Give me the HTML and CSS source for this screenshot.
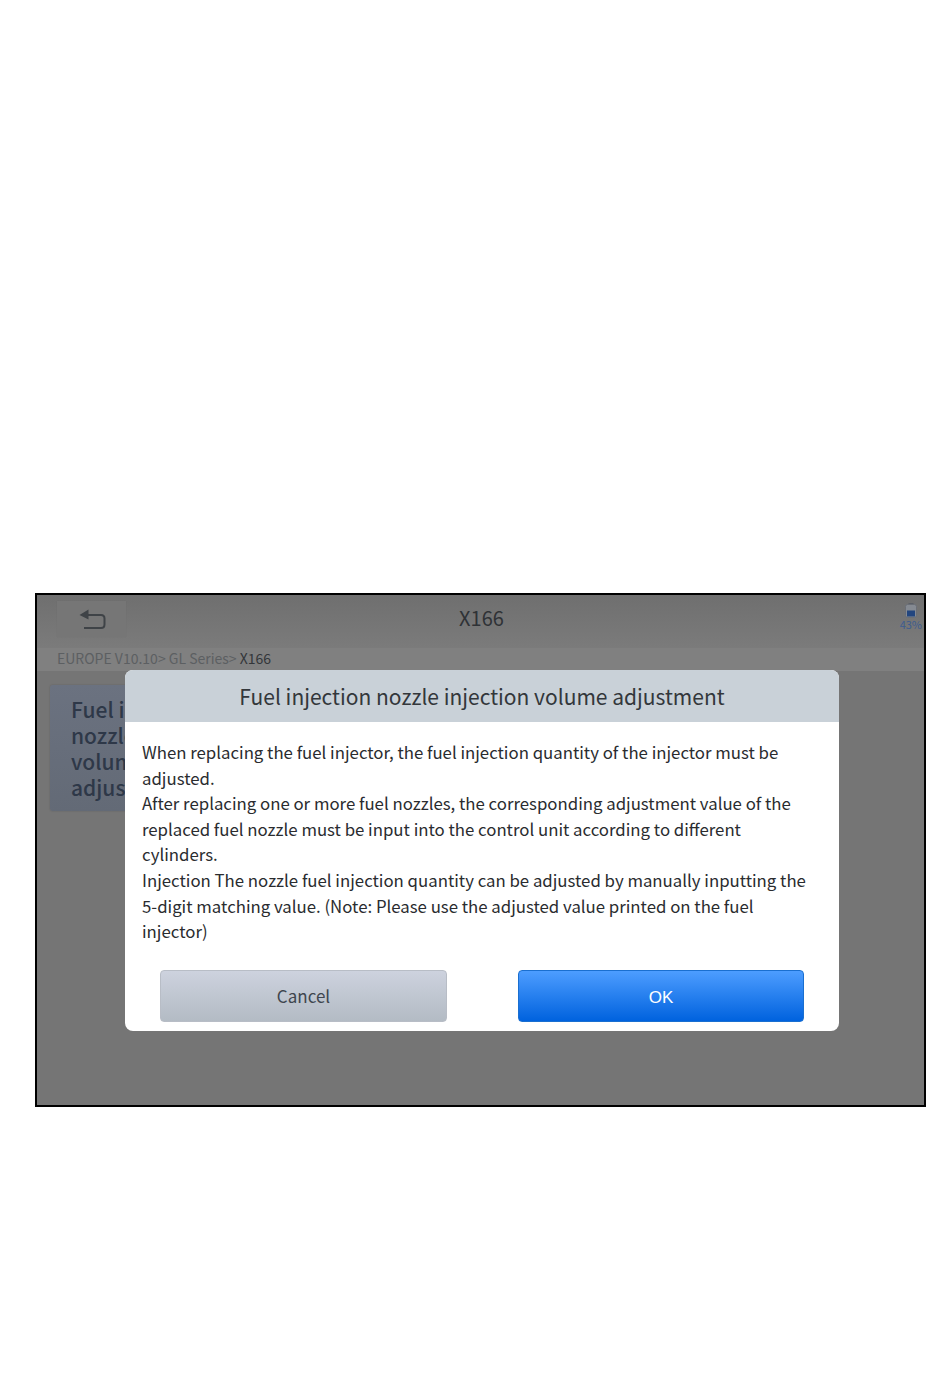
FILE: index.html
```html
<!DOCTYPE html>
<html lang="en">

<head>
  <meta charset="UTF-8" />
  <meta name="viewport" content="width=device-width, initial-scale=1.0" />
  <title>X166</title>
  <link rel="stylesheet" href="styles.css">
</head>

<body>
  <div class="screen">
    <header class="topbar">
      <div class="back-btn">
        <svg width="30" height="24" viewBox="0 0 30 24" fill="none" stroke="#3f4347" stroke-width="2">
          <path d="M9 8H24Q27.5 8 27.5 11.5V17.5Q27.5 21 24 21H7" />
          <path d="M11.5 2.5L2.5 8L11.5 12.5V2.5Z" fill="#3f4347" stroke="none" />
        </svg>
      </div>
      <h1 class="topbar-title">X166</h1>
      <div class="battery">
        <svg width="12" height="15" viewBox="0 0 12 15">
          <rect x="3.5" y="0" width="5" height="2" fill="#5c6068" />
          <rect x="0.5" y="1.5" width="11" height="13" rx="2" fill="#858a92" stroke="#6a6e76" />
          <rect x="2" y="7.5" width="8" height="6" fill="#23467f" />
        </svg>
        <span class="battery-text">43%</span>
      </div>
    </header>

    <div class="crumbs">
      <span>EUROPE V10.10&gt; GL Series&gt;</span> <span class="crumb-current">X166</span>
    </div>

    <main class="content">
      <div class="menu-card">Fuel injection nozzle injection volume adjustment</div>
    </main>

    <div class="dialog">
      <div class="dialog-title">Fuel injection nozzle injection volume adjustment</div>
      <div class="dialog-body">
        <p>When replacing the fuel injector, the fuel injection quantity of the injector must be adjusted.</p>
        <p>After replacing one or more fuel nozzles, the corresponding adjustment value of the replaced fuel nozzle must be input into the control unit according to different cylinders.</p>
        <p>Injection The nozzle fuel injection quantity can be adjusted by manually inputting the 5-digit matching value. (Note: Please use the adjusted value printed on the fuel injector)</p>
      </div>
      <div class="dialog-actions">
        <button class="btn btn-cancel">Cancel</button>
        <button class="btn btn-ok">OK</button>
      </div>
    </div>
  </div>
</body>

</html>
```

FILE: styles.css
```css
body {
  margin: 0;
  padding: 0;
  background-color: #fff;
  font-family: "Noto Sans CJK SC", "Noto Sans", sans-serif;
}

.screen {
  position: relative;
  box-sizing: border-box;
  width: 891px;
  height: 514px;
  margin: 593px 0 0 35px;
  border: 2px solid #000;
  background-color: #757575;
  display: flex;
  flex-direction: column;
  overflow: hidden;
}

.topbar {
  position: relative;
  flex: none;
  height: 53px;
  display: flex;
  align-items: center;
  justify-content: center;
  background: linear-gradient(#6f6f6f, #7b7b7b);
}

.back-btn {
  position: absolute;
  left: 20px;
  top: 6px;
  width: 69px;
  height: 36px;
  display: flex;
  align-items: center;
  justify-content: center;
  background-color: #767676;
  box-shadow: 0 0 1px rgba(0, 0, 0, 0.1);
}

.topbar-title {
  margin: 0 0 0 2px;
  font-size: 20px;
  font-weight: 400;
  color: #2f3236;
  transform: translateY(-4px);
}

.battery {
  position: absolute;
  right: 2px;
  top: 8px;
  display: flex;
  flex-direction: column;
  align-items: center;
}

.battery-text {
  font-size: 11px;
  line-height: 13px;
  color: #3d5c8f;
}

.crumbs {
  flex: none;
  height: 23px;
  padding-left: 20px;
  font-size: 14px;
  line-height: 21px;
  color: #5c5f62;
  background-color: #808080;
}

.crumb-current {
  color: #33363a;
}

.content {
  flex: 1;
  padding: 14px 0 0 13px;
}

.menu-card {
  box-sizing: border-box;
  width: 205px;
  height: 126px;
  padding: 11px 12px 0 21px;
  overflow: hidden;
  font-size: 21px;
  font-weight: 500;
  line-height: 26px;
  color: #2e3848;
  background: linear-gradient(#6b7280, #636a76);
  border-radius: 3px;
  box-shadow: 0 0 2px rgba(0, 0, 0, 0.2);
}

.dialog {
  position: absolute;
  left: 88px;
  top: 75px;
  width: 714px;
  height: 361px;
  display: flex;
  flex-direction: column;
  background-color: #fff;
  border-radius: 8px;
  overflow: hidden;
}

.dialog-title {
  flex: none;
  height: 52px;
  font-size: 21px;
  line-height: 52px;
  text-align: center;
  color: #33373b;
  background-color: #c9d1d8;
}

.dialog-body {
  flex: 1;
  padding: 18px 27px 0 17px;
  font-size: 16.8px;
  line-height: 25.6px;
  color: #2a2c2f;
}

.dialog-body p {
  margin: 0;
}

.dialog-actions {
  flex: none;
  display: flex;
  justify-content: space-between;
  padding: 0 35px 9px;
}

.btn {
  box-sizing: border-box;
  width: 287px;
  height: 52px;
  padding: 0 0 1px;
  border-radius: 4px;
  font-family: inherit;
  font-size: 17px;
}

.btn-cancel {
  color: #3f464e;
  border: 1px solid #b8bdc6;
  background: linear-gradient(#cdd2de, #b3bbc4);
}

.btn-ok {
  width: 286px;
  padding: 3px 0 0;
  color: #fff;
  font-family: "Liberation Sans", sans-serif;
  border: 1px solid #1a6fd0;
  background: linear-gradient(#4d9dff, #0062de);
}
```
